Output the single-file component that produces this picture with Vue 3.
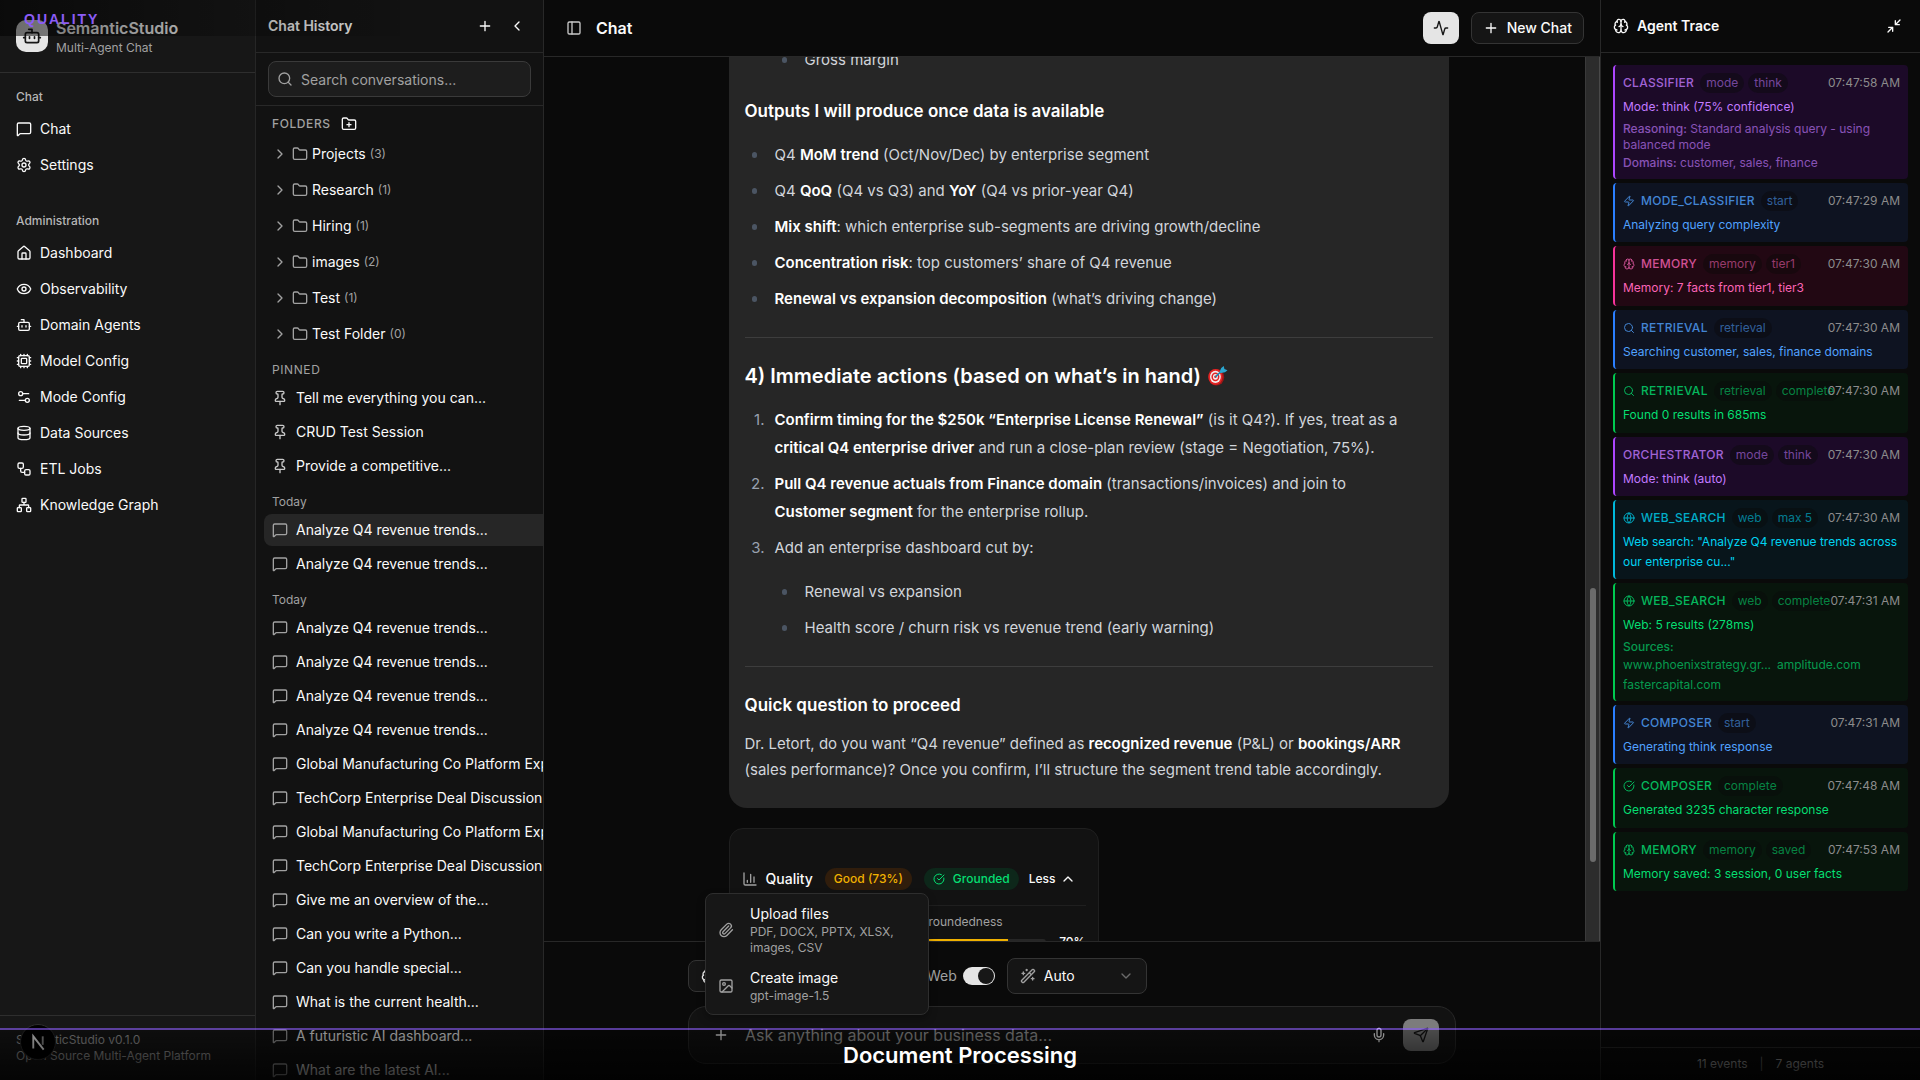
<script setup>
import { h, ref } from 'vue'

const icons = {
  bot: '<path d="M12 8V4H8"/><rect width="16" height="12" x="4" y="8" rx="2"/><path d="M2 14h2M20 14h2M15 13v2M9 13v2"/>',
  message: '<path d="M22 17a2 2 0 0 1-2 2H6.828a2 2 0 0 0-1.414.586l-2.202 2.202A.71.71 0 0 1 2 21.286V5a2 2 0 0 1 2-2h16a2 2 0 0 1 2 2z"/>',
  settings: '<path d="M9.671 4.136a2.34 2.34 0 0 1 4.659 0 2.34 2.34 0 0 0 3.319 1.915 2.34 2.34 0 0 1 2.33 4.033 2.34 2.34 0 0 0 0 3.831 2.34 2.34 0 0 1-2.33 4.033 2.34 2.34 0 0 0-3.319 1.915 2.34 2.34 0 0 1-4.659 0 2.34 2.34 0 0 0-3.32-1.915 2.34 2.34 0 0 1-2.33-4.033 2.34 2.34 0 0 0 0-3.831A2.34 2.34 0 0 1 6.35 6.051a2.34 2.34 0 0 0 3.319-1.915"/><circle cx="12" cy="12" r="3"/>',
  house: '<path d="M15 21v-8a1 1 0 0 0-1-1h-4a1 1 0 0 0-1 1v8"/><path d="M3 10a2 2 0 0 1 .709-1.528l7-6a2 2 0 0 1 2.582 0l7 6A2 2 0 0 1 21 10v9a2 2 0 0 1-2 2H5a2 2 0 0 1-2-2z"/>',
  eye: '<path d="M2.062 12.348a1 1 0 0 1 0-.696 10.75 10.75 0 0 1 19.876 0 1 1 0 0 1 0 .696 10.75 10.75 0 0 1-19.876 0"/><circle cx="12" cy="12" r="3"/>',
  cpu: '<rect width="16" height="16" x="4" y="4" rx="2"/><rect width="8" height="8" x="8" y="8" rx="1"/><path d="M12 20v2M12 2v2M17 20v2M17 2v2M2 12h2M2 17h2M2 7h2M20 12h2M20 17h2M20 7h2M7 20v2M7 2v2"/>',
  sliders: '<path d="M14 17H5M19 7h-9"/><circle cx="17" cy="17" r="3"/><circle cx="7" cy="7" r="3"/>',
  database: '<ellipse cx="12" cy="5" rx="9" ry="3"/><path d="M3 5V19A9 3 0 0 0 21 19V5"/><path d="M3 12A9 3 0 0 0 21 12"/>',
  workflow: '<rect width="8" height="8" x="3" y="3" rx="2"/><path d="M7 11v4a2 2 0 0 0 2 2h4"/><rect width="8" height="8" x="13" y="13" rx="2"/>',
  network: '<rect x="16" y="16" width="6" height="6" rx="1"/><rect x="2" y="16" width="6" height="6" rx="1"/><rect x="9" y="2" width="6" height="6" rx="1"/><path d="M5 16v-3a1 1 0 0 1 1-1h12a1 1 0 0 1 1 1v3M12 12V8"/>',
  plus: '<path d="M5 12h14M12 5v14"/>',
  left: '<path d="m15 18-6-6 6-6"/>',
  right: '<path d="m9 18 6-6-6-6"/>',
  down: '<path d="m6 9 6 6 6-6"/>',
  up: '<path d="m18 15-6-6-6 6"/>',
  search: '<path d="m21 21-4.34-4.34"/><circle cx="11" cy="11" r="8"/>',
  folder: '<path d="M20 20a2 2 0 0 0 2-2V8a2 2 0 0 0-2-2h-7.9a2 2 0 0 1-1.69-.9L9.6 3.9A2 2 0 0 0 7.93 3H4a2 2 0 0 0-2 2v13a2 2 0 0 0 2 2Z"/>',
  folderPlus: '<path d="M12 10v6M9 13h6"/><path d="M20 20a2 2 0 0 0 2-2V8a2 2 0 0 0-2-2h-7.9a2 2 0 0 1-1.69-.9L9.6 3.9A2 2 0 0 0 7.93 3H4a2 2 0 0 0-2 2v13a2 2 0 0 0 2 2Z"/>',
  pin: '<path d="M12 17v5"/><path d="M9 10.76a2 2 0 0 1-1.11 1.79l-1.78.9A2 2 0 0 0 5 15.24V16a1 1 0 0 0 1 1h12a1 1 0 0 0 1-1v-.76a2 2 0 0 0-1.11-1.79l-1.78-.9A2 2 0 0 1 15 10.76V7a1 1 0 0 1 1-1 2 2 0 0 0 0-4H8a2 2 0 0 0 0 4 1 1 0 0 1 1 1z"/>',
  panel: '<rect width="18" height="18" x="3" y="3" rx="2"/><path d="M9 3v18"/>',
  activity: '<path d="M22 12h-2.48a2 2 0 0 0-1.93 1.46l-2.35 8.36a.25.25 0 0 1-.48 0L9.24 2.18a.25.25 0 0 0-.48 0l-2.35 8.36A2 2 0 0 1 4.49 12H2"/>',
  brain: '<path d="M12 18V5"/><path d="M15 13a4.17 4.17 0 0 1-3-4 4.17 4.17 0 0 1-3 4"/><path d="M17.598 6.5A3 3 0 1 0 12 5a3 3 0 1 0-5.598 1.5"/><path d="M17.997 5.125a4 4 0 0 1 2.526 5.77"/><path d="M18 18a4 4 0 0 0 2-7.464"/><path d="M19.967 17.483A4 4 0 1 1 12 18a4 4 0 1 1-7.967-.517"/><path d="M6 18a4 4 0 0 1-2-7.464"/><path d="M6.003 5.125a4 4 0 0 0-2.526 5.77"/>',
  minimize: '<path d="m14 10 7-7M20 10h-6V4M3 21l7-7M4 14h6v6"/>',
  zap: '<path d="M4 14a1 1 0 0 1-.78-1.63l9.9-10.2a.5.5 0 0 1 .86.46l-1.92 6.02A1 1 0 0 0 13 10h7a1 1 0 0 1 .78 1.63l-9.9 10.2a.5.5 0 0 1-.86-.46l1.92-6.02A1 1 0 0 0 11 14z"/>',
  globe: '<circle cx="12" cy="12" r="10"/><path d="M12 2a14.5 14.5 0 0 0 0 20 14.5 14.5 0 0 0 0-20M2 12h20"/>',
  check: '<path d="M21.801 10A10 10 0 1 1 17 3.335"/><path d="m9 11 3 3L22 4"/>',
  chart: '<path d="M3 3v16a2 2 0 0 0 2 2h16M18 17V9M13 17V5M8 17v-3"/>',
  paperclip: '<path d="m16 6-8.414 8.586a2 2 0 0 0 2.829 2.829l8.414-8.586a4 4 0 1 0-5.657-5.657l-8.379 8.551a6 6 0 1 0 8.485 8.485l8.379-8.551"/>',
  image: '<rect width="18" height="18" x="3" y="3" rx="2"/><circle cx="9" cy="9" r="2"/><path d="m21 15-3.086-3.086a2 2 0 0 0-2.828 0L6 21"/>',
  wand: '<path d="m21.64 3.64-1.28-1.28a1.21 1.21 0 0 0-1.72 0L2.36 18.64a1.21 1.21 0 0 0 0 1.72l1.28 1.28a1.2 1.2 0 0 0 1.72 0L21.64 5.36a1.2 1.2 0 0 0 0-1.72M14 7l3 3M5 6v4M19 14v4M10 2v2M7 8H3M21 16h-4M11 3H9"/>',
  mic: '<path d="M12 19v3M19 10v2a7 7 0 0 1-14 0v-2"/><rect x="9" y="2" width="6" height="13" rx="3"/>',
  send: '<path d="M14.536 21.686a.5.5 0 0 0 .937-.024l6.5-19a.496.496 0 0 0-.635-.635l-19 6.5a.5.5 0 0 0-.024.937l7.93 3.18a2 2 0 0 1 1.112 1.11z"/><path d="m21.854 2.147-10.94 10.939"/>'
}

const Icon = (props) =>
  h('svg', { class: 'icon', viewBox: '0 0 24 24', 'aria-hidden': 'true', innerHTML: icons[props.name] })
Icon.props = ['name']

const navGroups = [
  { label: 'Chat', items: [['message', 'Chat'], ['settings', 'Settings']] },
  {
    label: 'Administration',
    items: [
      ['house', 'Dashboard'],
      ['eye', 'Observability'],
      ['bot', 'Domain Agents'],
      ['cpu', 'Model Config'],
      ['sliders', 'Mode Config'],
      ['database', 'Data Sources'],
      ['workflow', 'ETL Jobs'],
      ['network', 'Knowledge Graph']
    ]
  }
]

const folders = [
  ['Projects', 3],
  ['Research', 1],
  ['Hiring', 1],
  ['images', 2],
  ['Test', 1],
  ['Test Folder', 0]
]

const analyze = 'Analyze Q4 revenue trends...'
const sessionGroups = [
  {
    label: 'PINNED',
    icon: 'pin',
    items: ['Tell me everything you can...', 'CRUD Test Session', 'Provide a competitive...']
  },
  { label: 'Today', icon: 'message', active: 0, items: [analyze, analyze] },
  {
    label: 'Today',
    icon: 'message',
    items: [
      analyze,
      analyze,
      analyze,
      analyze,
      'Global Manufacturing Co Platform Exp',
      'TechCorp Enterprise Deal Discussion',
      'Global Manufacturing Co Platform Exp',
      'TechCorp Enterprise Deal Discussion',
      'Give me an overview of the...',
      'Can you write a Python...',
      'Can you handle special...',
      'What is the current health...',
      'A futuristic AI dashboard...',
      'What are the latest AI...'
    ]
  }
]

const events = [
  {
    tone: 'purple', agent: 'CLASSIFIER', tags: ['mode', 'think'], time: '07:47:58 AM',
    text: 'Mode: think (75% confidence)',
    details: [
      ['Reasoning:', 'Standard analysis query - using balanced mode'],
      ['Domains:', 'customer, sales, finance']
    ]
  },
  { tone: 'blue', icon: 'zap', agent: 'MODE_CLASSIFIER', tags: ['start'], time: '07:47:29 AM', text: 'Analyzing query complexity' },
  { tone: 'pink', icon: 'brain', agent: 'MEMORY', tags: ['memory', 'tier1'], time: '07:47:30 AM', text: 'Memory: 7 facts from tier1, tier3' },
  { tone: 'blue', icon: 'search', agent: 'RETRIEVAL', tags: ['retrieval'], time: '07:47:30 AM', text: 'Searching customer, sales, finance domains' },
  { tone: 'green', icon: 'search', agent: 'RETRIEVAL', tags: ['retrieval', 'complete'], time: '07:47:30 AM', text: 'Found 0 results in 685ms' },
  { tone: 'purple', agent: 'ORCHESTRATOR', tags: ['mode', 'think'], time: '07:47:30 AM', text: 'Mode: think (auto)' },
  { tone: 'cyan', icon: 'globe', agent: 'WEB_SEARCH', tags: ['web', 'max 5'], time: '07:47:30 AM', text: 'Web search: "Analyze Q4 revenue trends across our enterprise cu..."' },
  {
    tone: 'green', icon: 'globe', agent: 'WEB_SEARCH', tags: ['web', 'complete'], time: '07:47:31 AM',
    text: 'Web: 5 results (278ms)',
    sources: ['www.phoenixstrategy.gr...', 'amplitude.com', 'fastercapital.com']
  },
  { tone: 'blue', icon: 'zap', agent: 'COMPOSER', tags: ['start'], time: '07:47:31 AM', text: 'Generating think response' },
  { tone: 'green', icon: 'check', agent: 'COMPOSER', tags: ['complete'], time: '07:47:48 AM', text: 'Generated 3235 character response' },
  { tone: 'green', icon: 'brain', agent: 'MEMORY', tags: ['memory', 'saved'], time: '07:47:53 AM', text: 'Memory saved: 3 session, 0 user facts' }
]

const web = ref(true)
const mode = ref('Auto')
const draft = ref('')
const query = ref('')
</script>

<template>
  <div class="app">
    <aside class="sidebar">
      <header class="brand">
        <span class="logo"><Icon name="bot" /></span>
        <div>
          <div class="brand-name">SemanticStudio</div>
          <div class="brand-sub">Multi-Agent Chat</div>
        </div>
      </header>
      <nav class="nav">
        <section v-for="g in navGroups" :key="g.label" class="nav-group">
          <h2 class="nav-label">{{ g.label }}</h2>
          <a v-for="[icon, text] in g.items" :key="text" class="nav-item" href="#">
            <Icon :name="icon" /><span>{{ text }}</span>
          </a>
        </section>
      </nav>
      <footer class="sidebar-foot">
        <div>SemanticStudio v0.1.0</div>
        <div>Open Source Multi-Agent Platform</div>
      </footer>
    </aside>

    <section class="history">
      <header class="panel-head">
        <h2 class="panel-title muted-title">Chat History</h2>
        <div class="head-actions">
          <button class="icon-btn" aria-label="New conversation"><Icon name="plus" /></button>
          <button class="icon-btn" aria-label="Collapse history"><Icon name="left" /></button>
        </div>
      </header>
      <div class="search-wrap">
        <label class="search">
          <Icon name="search" />
          <input v-model="query" type="text" placeholder="Search conversations..." aria-label="Search conversations" />
        </label>
      </div>
      <div class="history-list">
        <div class="folders-head">
          <h3 class="caps">FOLDERS</h3>
          <button class="icon-btn small" aria-label="New folder"><Icon name="folderPlus" /></button>
        </div>
        <ul class="folders">
          <li v-for="[name, count] in folders" :key="name" class="folder">
            <Icon name="right" /><Icon name="folder" />
            <span class="folder-name">{{ name }}</span>
            <span class="count">({{ count }})</span>
          </li>
        </ul>
        <section v-for="(g, gi) in sessionGroups" :key="gi" class="session-group">
          <h3 :class="['group-label', { caps: g.label === 'PINNED' }]">{{ g.label }}</h3>
          <a
            v-for="(s, i) in g.items"
            :key="i"
            href="#"
            :class="['session', { active: g.active === i }]"
          ><Icon :name="g.icon" /><span>{{ s }}</span></a>
        </section>
      </div>
    </section>

    <main class="main">
      <header class="main-head">
        <button class="icon-btn dim" aria-label="Toggle sidebar"><Icon name="panel" /></button>
        <h1 class="main-title">Chat</h1>
        <button class="trace-btn" aria-label="Toggle agent trace"><Icon name="activity" /></button>
        <button class="new-chat"><Icon name="plus" />New Chat</button>
      </header>

      <div class="scroll">
        <div class="scroll-view">
          <div class="thread">
            <article class="bubble">
              <ul class="nested-top"><li>Gross margin</li></ul>
              <h4>Outputs I will produce once data is available</h4>
              <ul>
                <li>Q4 <strong>MoM trend</strong> (Oct/Nov/Dec) by enterprise segment</li>
                <li>Q4 <strong>QoQ</strong> (Q4 vs Q3) and <strong>YoY</strong> (Q4 vs prior-year Q4)</li>
                <li><strong>Mix shift</strong>: which enterprise sub-segments are driving growth/decline</li>
                <li><strong>Concentration risk</strong>: top customers’ share of Q4 revenue</li>
                <li><strong>Renewal vs expansion decomposition</strong> (what’s driving change)</li>
              </ul>
              <hr />
              <h3>
                4) Immediate actions (based on what’s in hand)
                <svg class="target" viewBox="0 0 24 24" role="img" aria-label="Bullseye">
                  <ellipse cx="10.500" cy="13.500" rx="9.500" ry="10" fill="#9d1717" />
                  <ellipse cx="9.500" cy="13" rx="8.500" ry="9.500" fill="#e32626" />
                  <ellipse cx="9.500" cy="13" rx="6.500" ry="7.300" fill="#f4eeee" />
                  <ellipse cx="9.500" cy="13" rx="4.800" ry="5.300" fill="#e32626" />
                  <ellipse cx="9.500" cy="13" rx="3" ry="3.500" fill="#f4eeee" />
                  <circle cx="9.500" cy="13" r="1.500" fill="#e32626" />
                  <path d="M9.500 13 17 6" stroke="#1789b4" stroke-width="1.800" />
                  <path d="m14.500 7 2-4.500L19.500 0l.8 3.500L24 5l-3 2.500-5 .8z" fill="#2ba6d0" />
                </svg>
              </h3>
              <ol>
                <li><strong>Confirm timing for the $250k “Enterprise License Renewal”</strong> (is it Q4?). If yes, treat as a <strong>critical Q4 enterprise driver</strong> and run a close-plan review (stage = Negotiation, 75%).</li>
                <li><strong>Pull Q4 revenue actuals from Finance domain</strong> (transactions/invoices) and join to<br /><strong>Customer segment</strong> for the enterprise rollup.</li>
                <li>
                  Add an enterprise dashboard cut by:
                  <ul>
                    <li>Renewal vs expansion</li>
                    <li>Health score / churn risk vs revenue trend (early warning)</li>
                  </ul>
                </li>
              </ol>
              <hr />
              <h4>Quick question to proceed</h4>
              <p>Dr. Letort, do you want “Q4 revenue” defined as <strong>recognized revenue</strong> (P&amp;L) or <strong>bookings/ARR</strong> (sales performance)? Once you confirm, I’ll structure the segment trend table accordingly.</p>
            </article>

            <section class="quality">
              <div class="quality-row">
                <Icon name="chart" />
                <h4 class="quality-title">Quality</h4>
                <span class="pill amber">Good (73%)</span>
                <span class="pill green-pill"><Icon name="check" />Grounded</span>
                <button class="less">Less<Icon name="up" /></button>
              </div>
              <div class="metrics">
                <div class="metric">
                  <div class="metric-label">Groundedness</div>
                  <div class="metric-row">
                    <div class="bar"><div class="bar-fill" :style="{ width: '70%' }"></div></div>
                    <span class="metric-value">70%</span>
                  </div>
                </div>
              </div>
            </section>
          </div>
        </div>
        <div class="track" aria-hidden="true"><div class="thumb"></div></div>
      </div>

      <div class="composer">
        <div class="composer-inner">
          <div class="tools">
            <button class="think" aria-label="Thinking mode"><Icon name="brain" /></button>
            <label class="web">Web<input v-model="web" type="checkbox" role="switch" class="switch" /></label>
            <div class="mode">
              <Icon name="wand" />
              <select v-model="mode" aria-label="Mode"><option>Auto</option></select>
              <Icon name="down" />
            </div>
          </div>
          <div class="prompt">
            <button class="prompt-btn" aria-label="Attach"><Icon name="plus" /></button>
            <input v-model="draft" type="text" placeholder="Ask anything about your business data..." aria-label="Message" />
            <button class="prompt-btn" aria-label="Dictate"><Icon name="mic" /></button>
            <button class="send" aria-label="Send"><Icon name="send" /></button>
          </div>
          <div class="menu" role="menu">
            <button class="menu-item" role="menuitem">
              <Icon name="paperclip" />
              <span class="menu-text"><span class="menu-title">Upload files</span><span class="menu-desc">PDF, DOCX, PPTX, XLSX, images, CSV</span></span>
            </button>
            <button class="menu-item" role="menuitem">
              <Icon name="image" />
              <span class="menu-text"><span class="menu-title">Create image</span><span class="menu-desc">gpt-image-1.5</span></span>
            </button>
          </div>
        </div>
      </div>
    </main>

    <aside class="trace">
      <header class="panel-head">
        <Icon name="brain" />
        <h2 class="panel-title">Agent Trace</h2>
        <div class="head-actions">
          <button class="icon-btn" aria-label="Minimize trace"><Icon name="minimize" /></button>
        </div>
      </header>
      <div class="events">
        <article v-for="(e, i) in events" :key="i" :class="['event', e.tone]">
          <div class="event-head">
            <div class="event-id">
              <Icon v-if="e.icon" :name="e.icon" />
              <span class="agent">{{ e.agent }}</span>
              <span class="tags"><span v-for="t in e.tags" :key="t" class="tag">{{ t }}</span></span>
            </div>
            <time class="time">{{ e.time }}</time>
          </div>
          <p class="event-text">{{ e.text }}</p>
          <div v-if="e.details" class="details">
            <div v-for="[k, v] in e.details" :key="k"><b>{{ k }}</b> {{ v }}</div>
          </div>
          <div v-if="e.sources" class="details">
            <div><b>Sources:</b></div>
            <div class="sources"><span v-for="s in e.sources" :key="s">{{ s }}</span></div>
          </div>
        </article>
      </div>
      <footer class="trace-foot"><span>11 events</span><span class="sep">|</span><span>7 agents</span></footer>
    </aside>

    <div class="dev-badge" aria-hidden="true">
      <svg viewBox="0 0 36 36">
        <path d="M13 25V12l11 14" fill="none" stroke="#fff" stroke-width="2" />
        <path d="M23 12v9" fill="none" stroke="#9a9a9a" stroke-width="2" />
      </svg>
    </div>
    <div class="top-caption"><span>QUALITY</span></div>
    <div class="bottom-caption"><span>Document Processing</span></div>
  </div>
</template>

<style>
body {
  background: #0a0a0a;
}
</style>

<style scoped>
* {
  box-sizing: border-box;
  margin: 0;
  padding: 0;
}
.app {
  position: relative;
  display: flex;
  height: 100vh;
  overflow: hidden;
  background: #0a0a0a;
  color: #fafafa;
  font: 14px/20px Inter, "Liberation Sans", sans-serif;
}
button,
input,
select {
  font: inherit;
  color: inherit;
  background: none;
  border: 0;
  outline: 0;
}
a {
  color: inherit;
  text-decoration: none;
}
ul,
ol {
  list-style: none;
}
.icon {
  width: 16px;
  height: 16px;
  flex: none;
  display: block;
  fill: none;
  stroke: currentColor;
  stroke-width: 2;
  stroke-linecap: round;
  stroke-linejoin: round;
}

/* navigation sidebar */
.sidebar {
  width: 256px;
  flex: none;
  display: flex;
  flex-direction: column;
  background: #171717;
  border-right: 1px solid #262626;
}
.brand {
  display: flex;
  align-items: center;
  gap: 8px;
  padding: 16px;
  border-bottom: 1px solid #2e2e2e;
}
.logo {
  width: 32px;
  height: 32px;
  display: grid;
  place-items: center;
  background: #e5e5e5;
  color: #171717;
  border-radius: 10px;
}
.logo .icon {
  width: 20px;
  height: 20px;
}
.brand-name {
  font-size: 16px;
  line-height: 24px;
  font-weight: 600;
}
.brand-sub {
  font-size: 12px;
  line-height: 16px;
  color: #a1a1a1;
}
.nav {
  flex: 1;
  display: flex;
  flex-direction: column;
  gap: 8px;
  overflow: hidden;
}
.nav-group {
  padding: 8px;
  display: flex;
  flex-direction: column;
}
.nav-label {
  padding: 0 8px;
  font-size: 12px;
  line-height: 32px;
  font-weight: 500;
  color: #b5b5b5;
}
.nav-item {
  display: flex;
  align-items: center;
  gap: 8px;
  height: 32px;
  padding: 0 8px;
  border-radius: 8px;
}
.nav-item + .nav-item {
  margin-top: 4px;
}
.sidebar-foot {
  padding: 16px;
  border-top: 1px solid #2e2e2e;
  font-size: 12px;
  line-height: 16px;
  color: #a1a1a1;
}

/* history panel */
.history {
  width: 288px;
  flex: none;
  display: flex;
  flex-direction: column;
  background: #121212;
  border-right: 1px solid #282828;
  overflow: hidden;
}
.panel-head {
  flex: none;
  display: flex;
  align-items: center;
  gap: 8px;
  padding: 12px;
  border-bottom: 1px solid #282828;
}
.panel-title {
  font-size: 14px;
  line-height: 20px;
  font-weight: 600;
}
.muted-title {
  color: #e0e0e0;
}
.head-actions {
  display: flex;
  gap: 4px;
  margin-left: auto;
}
.icon-btn {
  width: 28px;
  height: 28px;
  display: grid;
  place-items: center;
  border-radius: 6px;
}
.icon-btn.small {
  height: 24px;
  width: 24px;
}
.dim {
  color: #c8c8c8;
}
.search-wrap {
  padding: 8px 12px;
  border-bottom: 1px solid #282828;
}
.search {
  display: flex;
  align-items: center;
  gap: 8px;
  height: 36px;
  padding: 0 8px;
  border: 1px solid #3a3a3a;
  border-radius: 8px;
  background: #1d1d1d;
  color: #a1a1a1;
}
.search input {
  flex: 1;
  min-width: 0;
  line-height: 22px;
  padding-top: 2px;
}
input::placeholder {
  color: #a1a1a1;
  opacity: 1;
}
.history-list {
  flex: 1;
  min-height: 0;
  overflow: hidden;
  padding: 6px 0 0 8px;
}
.folders-head {
  display: flex;
  align-items: center;
  gap: 6px;
  padding-left: 8px;
}
.caps {
  font-size: 12px;
  line-height: 16px;
  font-weight: 500;
  letter-spacing: 0.05em;
  color: #a1a1a1;
}
.folders {
  display: flex;
  flex-direction: column;
  gap: 4px;
  padding-top: 2px;
}
.folder {
  display: flex;
  align-items: center;
  gap: 4px;
  height: 32px;
  padding-left: 8px;
  color: #a1a1a1;
}
.folder-name {
  color: #fafafa;
}
.count {
  font-size: 12px;
}
.session-group {
  display: flex;
  flex-direction: column;
  gap: 2px;
  padding-top: 12px;
}
.group-label {
  padding: 0 8px 2px;
  font-size: 12px;
  line-height: 16px;
  font-weight: 400;
  color: #a1a1a1;
}
.session {
  display: flex;
  align-items: center;
  gap: 8px;
  height: 32px;
  padding-left: 8px;
  border-radius: 8px 0 0 8px;
  white-space: nowrap;
}
.session .icon {
  color: #a1a1a1;
}
.session-group:nth-of-type(1) .icon {
  color: #c8c8c8;
}
.active {
  background: #262626;
}

/* main column */
.main {
  flex: 1;
  min-width: 0;
  display: flex;
  flex-direction: column;
}
.main-head {
  flex: none;
  display: flex;
  align-items: center;
  gap: 8px;
  padding: 12px 16px;
  border-bottom: 1px solid #282828;
}
.main-title {
  flex: 1;
  font-size: 16px;
  line-height: 24px;
  font-weight: 600;
}
.trace-btn {
  width: 36px;
  height: 32px;
  display: grid;
  place-items: center;
  margin-right: 4px;
  border-radius: 8px;
  background: #e5e5e5;
  color: #171717;
}
.new-chat {
  display: flex;
  align-items: center;
  gap: 8px;
  height: 32px;
  padding: 0 11px;
  border: 1px solid #343434;
  border-radius: 8px;
  background: #151515;
  font-weight: 500;
}
.scroll {
  flex: 1;
  min-height: 0;
  display: flex;
}
.scroll-view {
  flex: 1;
  min-width: 0;
  overflow: hidden;
}
.thread {
  max-width: 768px;
  margin: 0 auto;
  padding-left: 48px;
}
.track {
  width: 15px;
  flex: none;
  padding: 0 3px 0 4px;
  background: #2c2c2c;
  border-left: 1px solid #3a3a3a;
  border-right: 1px solid #494949;
  display: flex;
  flex-direction: column;
  justify-content: flex-end;
}
.thumb {
  height: 31%;
  margin-bottom: 79px;
  border-radius: 4px;
  background: #6b6b6b;
}
.bubble {
  margin-top: -15px;
  padding: 0 16px 25px;
  border-radius: 0 0 18px 18px;
  background: #262626;
  color: #d1d5db;
  font-size: 15px;
  line-height: 28px;
}
.bubble strong,
.bubble h3,
.bubble h4 {
  color: #fff;
  font-weight: 600;
}
.bubble h3,
.bubble h4 {
  line-height: 28px;
  margin: 19px 0 12px;
}
.bubble h4 {
  font-size: 17px;
}
.bubble h3 {
  display: flex;
  align-items: center;
  gap: 5px;
  font-size: 20px;
}
.bubble ul,
.bubble ol {
  padding-left: 30px;
}
.bubble .nested-top {
  padding-left: 60px;
}
.bubble li {
  position: relative;
  padding: 4px 0;
}
.bubble ul > li::before {
  content: "";
  position: absolute;
  left: -23px;
  top: 15px;
  width: 5px;
  height: 6px;
  border-radius: 3px;
  background: #4b5563;
}
.bubble ol {
  counter-reset: step;
}
.bubble ol > li {
  counter-increment: step;
}
.bubble ol > li::before {
  content: counter(step) ".";
  position: absolute;
  right: 100%;
  margin-right: 10px;
  color: #99a1af;
}
.bubble ol ul {
  margin-top: 12px;
}
.bubble ol > li:last-child {
  padding-bottom: 0;
}
.bubble hr {
  border: 0;
  border-top: 1px solid #3d3d3d;
  margin-top: 20px;
}
.bubble hr + * {
  margin-top: 24px;
}
.bubble p {
  line-height: 26px;
}
.target {
  width: 23px;
  height: 20px;
}
.quality {
  width: 370px;
  margin-top: 20px;
  padding: 36px 12px 24px;
  border: 1px solid #1f1f1f;
  border-radius: 14px;
  background: #121212;
}
.quality-row {
  display: flex;
  align-items: center;
  height: 28px;
  color: #a1a1a1;
}
.quality-title {
  margin: 0 12px 0 8px;
  font-size: 14px;
  font-weight: 500;
  color: #fafafa;
}
.pill {
  display: flex;
  align-items: center;
  gap: 8px;
  height: 22px;
  padding: 0 9px;
  border-radius: 11px;
  font-size: 12px;
  font-weight: 500;
}
.pill .icon {
  width: 12px;
  height: 12px;
}
.amber {
  margin-right: 12px;
  background: #301d0c;
  color: #f0b100;
}
.green-pill {
  background: #0d271a;
  color: #05df72;
}
.less {
  display: flex;
  align-items: center;
  gap: 4px;
  margin-left: 10px;
  font-size: 12px;
  font-weight: 500;
  color: #fafafa;
}
.metrics {
  display: grid;
  grid-template-columns: 1fr 1fr;
  gap: 12px;
  margin-top: 12px;
  padding-top: 8px;
  border-top: 1px solid #1f1f1f;
}
.metric {
  grid-column: 2;
  font-size: 12px;
  line-height: 16px;
}
.metric-label {
  color: #a1a1a1;
}
.metric-row {
  display: flex;
  align-items: center;
  gap: 8px;
  margin-top: 4px;
}
.bar {
  flex: 1;
  height: 6px;
  border-radius: 3px;
  background: #262626;
  overflow: hidden;
}
.bar-fill {
  height: 100%;
  background: #f0b100;
}
.metric-value {
  width: 32px;
  text-align: right;
  font-weight: 500;
}

/* composer */
.composer {
  flex: none;
  padding: 16px;
  border-top: 1px solid #282828;
}
.composer-inner {
  position: relative;
  max-width: 768px;
  margin: 0 auto;
}
.tools {
  display: flex;
  align-items: center;
  margin-bottom: 12px;
}
.think {
  width: 84px;
  height: 32px;
  padding: 0 12px;
  border: 1px solid #343434;
  border-radius: 8px;
  background: #151515;
}
.web {
  display: flex;
  align-items: center;
  gap: 6px;
  margin: 0 12px 0 155px;
  color: #a1a1a1;
}
.switch {
  appearance: none;
  width: 32px;
  height: 18px;
  padding: 1px;
  display: flex;
  justify-content: flex-end;
  border-radius: 9px;
  background: #e5e5e5;
}
.switch::before {
  content: "";
  width: 16px;
  height: 16px;
  border-radius: 8px;
  background: #171717;
}
.switch:not(:checked) {
  justify-content: flex-start;
  background: #3a3a3a;
}
.mode {
  display: flex;
  align-items: center;
  gap: 8px;
  width: 140px;
  height: 36px;
  padding: 0 12px;
  border: 1px solid #343434;
  border-radius: 8px;
  background: #151515;
}
.mode .icon {
  color: #a1a1a1;
}
.mode .icon:last-child {
  color: #6a6a6a;
}
.mode select {
  flex: 1;
  min-width: 0;
  appearance: none;
}
.prompt {
  display: flex;
  align-items: center;
  gap: 8px;
  padding: 12px 16px;
  border: 1px solid #282828;
  border-radius: 18px;
  background: #121212;
}
.prompt input {
  flex: 1;
  min-width: 0;
  font-size: 16px;
  line-height: 24px;
}
.prompt-btn {
  width: 32px;
  height: 32px;
  display: grid;
  place-items: center;
}
.send {
  width: 36px;
  height: 32px;
  display: grid;
  place-items: center;
  border-radius: 8px;
  background: #e5e5e5;
  color: #171717;
  opacity: 0.5;
}
.menu {
  position: absolute;
  left: 17px;
  bottom: 49px;
  width: 224px;
  padding: 4px;
  border: 1px solid #2e2e2e;
  border-radius: 8px;
  background: #171717;
  box-shadow: 0 4px 8px rgba(0, 0, 0, 0.3);
}
.menu-item {
  width: 100%;
  display: flex;
  align-items: center;
  gap: 16px;
  padding: 6px 8px;
  text-align: left;
}
.menu-item .icon {
  color: #a1a1a1;
}
.menu-title,
.menu-desc {
  display: block;
}
.menu-desc {
  font-size: 12px;
  line-height: 16px;
  color: #a1a1a1;
}

/* agent trace */
.trace {
  width: 320px;
  flex: none;
  display: flex;
  flex-direction: column;
  border-left: 1px solid #282828;
}
.events {
  flex: 1;
  min-height: 0;
  overflow: hidden;
  padding: 12px;
  display: flex;
  flex-direction: column;
  gap: 4px;
}
.event {
  flex: none;
  padding: 8px;
  border-left: 2px solid var(--edge);
  border-radius: 4px;
  background: var(--fill);
  color: var(--ink);
  font-size: 12px;
  line-height: 16px;
}
.purple {
  --edge: #ad46ff;
  --fill: #1c0a28;
  --ink: #c27aff;
}
.blue {
  --edge: #2b7fff;
  --fill: #0e1321;
  --ink: #51a2ff;
}
.pink {
  --edge: #f6339a;
  --fill: #220813;
  --ink: #fb64b6;
}
.green {
  --edge: #00c950;
  --fill: #08150c;
  --ink: #05df72;
}
.cyan {
  --edge: #00b8db;
  --fill: #08151b;
  --ink: #00d3f2;
}
.event-head {
  display: flex;
  align-items: center;
  justify-content: space-between;
  height: 20px;
}
.event-id {
  display: flex;
  align-items: center;
  gap: 6px;
  flex: 1 1 0;
  min-width: 0;
  opacity: 0.8;
}
.event-id .icon {
  width: 12px;
  height: 12px;
}
.agent {
  font-weight: 500;
  letter-spacing: 0.025em;
}
.tags {
  display: flex;
  gap: 4px;
}
.tag {
  padding: 2px 6px;
  border-radius: 10px;
  background: rgba(10, 10, 10, 0.5);
  color: color-mix(in srgb, var(--ink) 70%, transparent);
}
.time {
  flex: none;
  position: relative;
  color: #8c8c8c;
}
.event-text {
  margin-top: 4px;
  line-height: 1.625;
}
.details {
  display: flex;
  flex-direction: column;
  gap: 2px;
  margin-top: 4px;
  opacity: 0.65;
}
.details b {
  font-weight: 500;
}
.sources {
  display: flex;
  flex-wrap: wrap;
  gap: 4px;
}
.sources span:first-child {
  width: 150px;
}
.trace-foot {
  flex: none;
  display: flex;
  justify-content: center;
  gap: 12px;
  padding: 8px;
  border-top: 1px solid #282828;
  font-size: 12px;
  line-height: 16px;
  color: #a1a1a1;
}
.sep {
  color: #6a6a6a;
}

/* floating layers */
.dev-badge {
  position: absolute;
  left: 20px;
  bottom: 20px;
  width: 36px;
  height: 36px;
  border: 1px solid #2e2e2e;
  border-radius: 50%;
  background: #000;
}
.top-caption {
  position: absolute;
  left: 0;
  top: 0;
  width: 400px;
  height: 36px;
  padding: 9px 24px;
  background: linear-gradient(90deg, rgba(0, 0, 0, 0.55), rgba(0, 0, 0, 0.05));
  color: #8b5cf6;
  font: 700 14px/20px "Liberation Sans", sans-serif;
  letter-spacing: 2px;
}
.bottom-caption {
  position: absolute;
  left: 0;
  right: 0;
  bottom: 0;
  height: 52px;
  display: flex;
  align-items: center;
  justify-content: center;
  border-top: 2px solid rgba(139, 92, 246, 0.6);
  background: linear-gradient(180deg, rgba(0, 0, 0, 0.4), rgba(0, 0, 0, 0.8)) padding-box;
  color: #fff;
  font: 600 22px/28px Inter, "Liberation Sans", sans-serif;
}
</style>
